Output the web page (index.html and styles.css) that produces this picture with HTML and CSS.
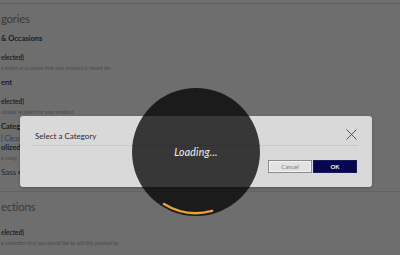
FILE: index.html
```html
<!DOCTYPE html>
<html lang="en">
<head>
	<meta charset="UTF-8">
	<title>Select a Category</title>
	<meta name="viewport" content="width=device-width, initial-scale=1">
	<link rel="stylesheet" href="styles.css">
</head>
<body>
	<div class="page">
		<div class="top-bar"></div>

		<div class="group">
			<h2 class="group-title">gories</h2>
			<p class="label">&amp; Occasions</p>
			<p class="value">elected)</p>
			<p class="hint">n event or occasion that your product is meant for.</p>

			<p class="label">ent</p>
			<p class="value">elected)</p>
			<p class="hint">uitable recipient for your product.</p>

			<p class="label">Categ</p>
			<p class="clear">| <a href="">Clear</a></p>
			<p class="label">olized?</p>
			<p class="hint">e categ</p>
			<p class="select">Sass <span class="caret">&#9662;</span></p>
		</div>

		<div class="group group-line">
			<h2 class="group-title">ections</h2>
			<p class="value">elected)</p>
			<p class="hint">e collection that you would like to add this product to.</p>
		</div>
	</div>

	<!-- modal: 카테고리 선택 -->
	<div class="modal" role="dialog">
		<div class="modal-head">
			<h3 class="modal-title">Select a Category</h3>
			<button type="button" class="modal-close" aria-label="Close">
				<svg width="11" height="11" viewBox="0 0 11 11"><path d="M0.5 0.5L10.5 10.5M10.5 0.5L0.5 10.5" stroke="#444" stroke-width="0.9" fill="none"/></svg>
			</button>
		</div>
		<div class="modal-foot">
			<button type="button" class="btn btn-cancel">Cancel</button>
			<button type="button" class="btn btn-ok">OK</button>
		</div>
	</div>

	<!-- loading spinner -->
	<div class="loading">
		<svg class="loading-arc" width="128" height="128" viewBox="0 0 128 128"><path d="M32 116 A61 61 0 0 0 80 122.9" stroke="#e9a23b" stroke-width="2.5" stroke-linecap="round" fill="none"/></svg>
		<span class="loading-text">Loading...</span>
	</div>
</body>
</html>
```

FILE: styles.css
```css
html, body { margin: 0; padding: 0; }
body { background: #6e6e6e; font-family: Lato, "Open Sans", sans-serif; color: #1c1c1c; width: 400px; height: 255px; overflow: hidden; }
p, h2, h3 { margin: 0; font-weight: normal; }

.top-bar { height: 3px; border-bottom: 1px solid #606060; }

.group { padding-left: 1px; }
.group-title { font-size: 11.5px; line-height: 14px; color: #3a3a3a; margin-top: 8px; letter-spacing: -0.3px; }
.label { font-size: 7.5px; font-weight: bold; line-height: 10px; margin-top: 6px; }
.group-title + .label { margin-top: 8px; }
.clear + .label { margin-top: 0; }
.value { font-size: 6.5px; font-weight: bold; line-height: 10px; color: #222; margin-top: 9px; }
.group-title + .value { margin-top: 14px; }
.hint { font-size: 5px; line-height: 8px; color: #4a4a4a; margin-top: 1px; }
.clear { font-size: 7px; line-height: 10px; color: #333; margin-top: 1px; }
.clear a { color: #2f3c6a; text-decoration: none; }
.select { font-size: 8px; line-height: 12px; color: #2a2a2a; margin-top: 4px; }
.caret { font-size: 7px; }

.group-line { border-top: 1px solid #626262; margin-top: 13px; }
.group-line .group-title { margin-top: 8px; }

.modal { position: absolute; left: 20px; top: 116px; width: 352px; height: 71px; background: #d9d9d9; border-radius: 3px; box-shadow: 0 1px 3px rgba(0,0,0,0.25); }
.modal-head { display: flex; align-items: flex-end; justify-content: space-between; height: 25px; padding-bottom: 4px; margin: 0 14px 0 13px; border-bottom: 1px solid #c6c6c6; }
.modal-title { font-size: 8px; line-height: 10px; color: #2a2a2a; padding-left: 2px; }
.modal-close { border: none; background: none; padding: 0; margin: 0 1px 1px 0; width: 11px; height: 11px; display: flex; }
.modal-foot { display: flex; justify-content: flex-end; gap: 1px; padding: 14px 15px 0 0; }
.btn { width: 44px; height: 13px; font-family: Lato, sans-serif; font-size: 6px; padding: 0; cursor: pointer; }
.btn-cancel { background: #e3e3e3; color: #7a7a7a; border: 1px solid #8c8c8c; box-shadow: inset 0 0 0 1px #f2f2f2; }
.btn-ok { background: #07074f; color: #fff; border: 1px solid #1a1a5a; font-weight: bold; }

.loading { position: absolute; left: 132px; top: 88px; width: 128px; height: 128px; border-radius: 50%; background: rgba(0,0,0,0.75); display: flex; align-items: center; justify-content: center; }
.loading-arc { position: absolute; left: 0; top: 0; }
.loading-text { font-size: 10.5px; font-style: italic; color: #f4f4f4; letter-spacing: 0.2px; }
```
